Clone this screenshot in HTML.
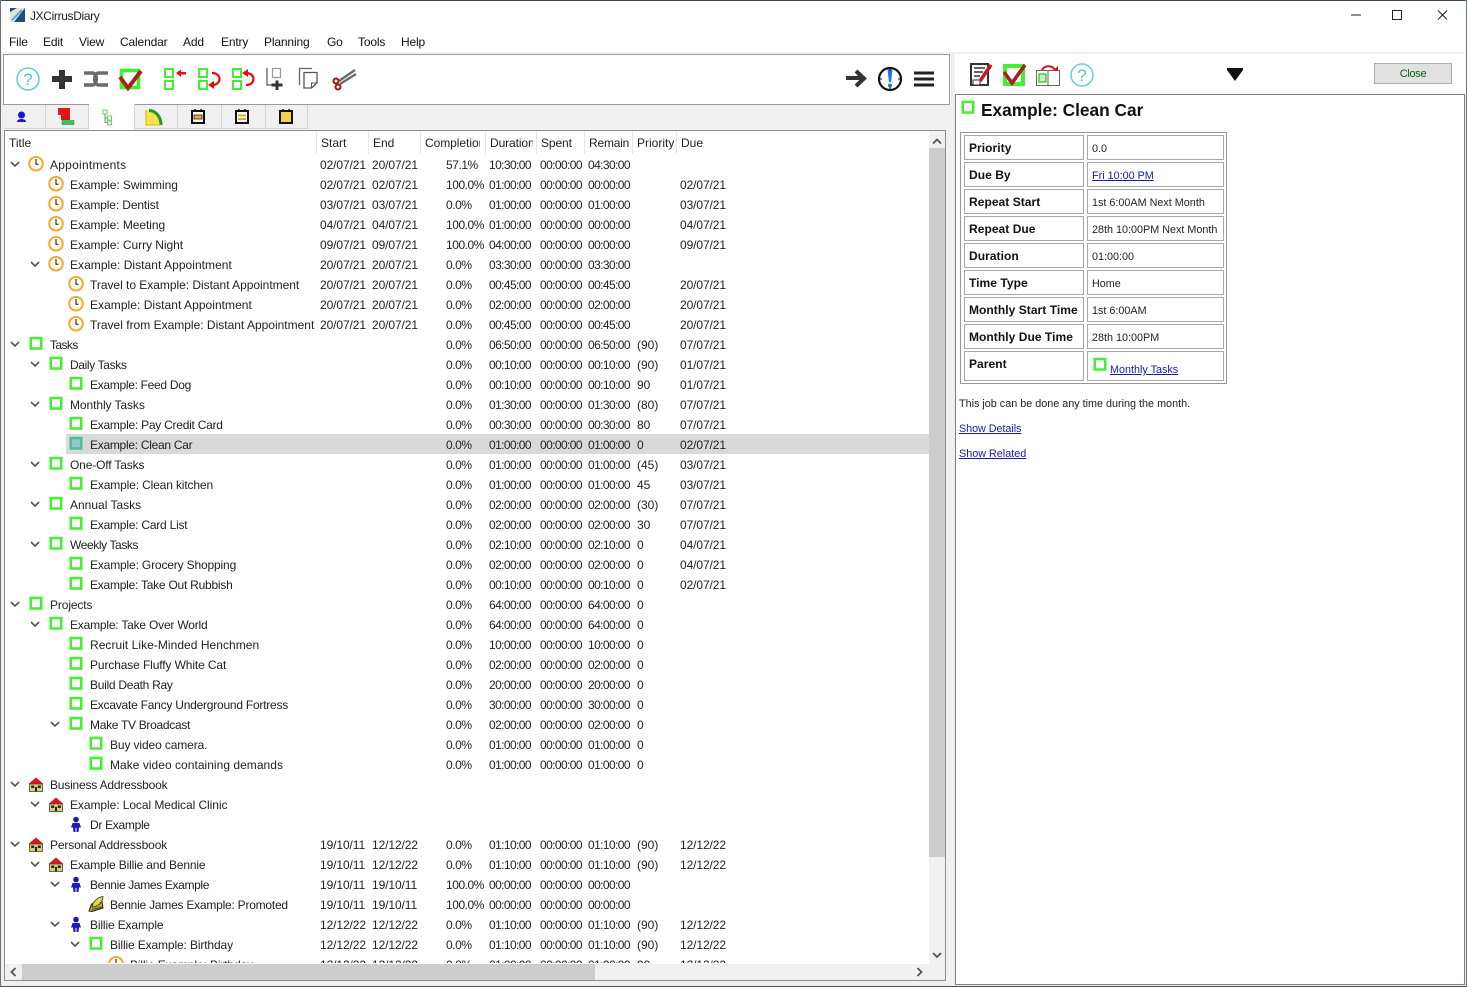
<!DOCTYPE html>
<html><head><meta charset="utf-8"><title>JXCirrusDiary</title>
<style>
html,body{margin:0;padding:0;width:1467px;height:987px;overflow:hidden;background:#f0f0f0}
body{position:relative;font-family:"Liberation Sans",sans-serif;font-size:12px;color:#222}
div,span,svg,a{position:absolute;white-space:nowrap}
.menu span{top:35px;font-size:12px;line-height:14px;color:#111;letter-spacing:-.15px}
.tab{top:105px;height:24px;background:#f0f0f0;border-right:1px solid #d4d4d4;border-bottom:1px solid #d4d4d4;box-sizing:border-box}
.h{top:136px;line-height:14px;color:#222}
.sep{top:132px;width:1px;height:22px;background:#e6e6e6}
#tree{left:5px;top:155px;width:924px;height:808px;overflow:hidden}
.r{left:-5px;width:930px;height:20px;line-height:20px}
.r span{top:0}
.s{left:320px;letter-spacing:-.1px}.e{left:372px;letter-spacing:-.1px}.c{left:446px;letter-spacing:-.45px}.d{left:489px;letter-spacing:-.6px}.p{left:540px;letter-spacing:-.6px}.m{left:588px;letter-spacing:-.6px}.o{left:637px}.u{left:680px;letter-spacing:-.1px}
.r svg{width:16px;height:16px;top:1px}
.r svg.k{width:10px;height:6px;top:6px}
.lbl,.val{background:#fff;border:1px solid #a8a8a8;box-sizing:border-box;height:25px}
.lbl{left:964px;width:120px;padding-left:4px;font-weight:bold;font-size:12px;color:#111;letter-spacing:.05px;line-height:24px}
.val{left:1087px;width:137px;padding-left:4px;color:#222;font-size:10.8px;line-height:26px}
a{color:#1a1aa6;text-decoration:underline}
</style></head><body>
<svg width="0" height="0" style="left:0;top:0"><defs>
<symbol id="clk" viewBox="0 0 16 16"><circle cx="8" cy="7.700" r="6.800" fill="#fffbe8" stroke="#f2a93b" stroke-width="2"/><path d="M8 3V8.300H10.500" fill="none" stroke="#333" stroke-width="1.200"/></symbol>
<symbol id="g" viewBox="0 0 16 16"><rect x="2.750" y="2" width="10.500" height="10.500" fill="#fff" stroke="#44ee33" stroke-width="2.500"/></symbol>
<symbol id="gs" viewBox="0 0 16 16"><rect x="2.750" y="2" width="10.500" height="10.500" fill="#9ac4cc" stroke="#4bc28c" stroke-width="2.500"/></symbol>
<symbol id="hs" viewBox="0 0 16 16"><path d="M.5 8L8 1.500L15.500 8Z" fill="#d8141c"/><rect x="1.500" y="8" width="13" height="7.500" fill="#d9cf6a" stroke="#444" stroke-width=".8"/><rect x="3.200" y="9.500" width="3" height="2.500" fill="#224"/><rect x="9.800" y="9.500" width="3" height="2.500" fill="#224"/><rect x="7" y="11" width="2" height="4.500" fill="#223"/></symbol>
<symbol id="pr" viewBox="0 0 16 16"><circle cx="8" cy="3.600" r="2.800" fill="#1a1ac0"/><path d="M4.500 7H11.500L13 11.500H11L10.500 16H8.500V12H7.500V16H5.500L5 11.500H3Z" fill="#1a1ac0"/></symbol>
<symbol id="bk" viewBox="0 0 16 16"><path d="M1 15L3.500 8L14 6L15 12L4 15.500Z" fill="#b5ad1e" stroke="#222" stroke-width="1"/><path d="M4 11C5 5 10 1 15 .5C15 6 10 11 4 11Z" fill="#dfd84a" stroke="#333" stroke-width=".8"/><path d="M4 13.500L14.500 11" stroke="#333" stroke-width=".8"/></symbol>
<symbol id="ch" viewBox="0 0 10 6"><path d="M1 1L5 5L9 1" fill="none" stroke="#555" stroke-width="1.600"/></symbol>
</defs></svg>

<!-- window chrome -->
<div style="left:0;top:0;width:1467px;height:52px;background:#fff"></div>
<div style="left:0;top:0;width:1467px;height:1px;background:#3c4a52"></div>
<div style="left:0;top:0;width:1px;height:987px;background:#6b7378"></div>
<div style="left:1466px;top:0;width:1px;height:987px;background:#6b7378"></div>
<div style="left:0;top:986px;width:1467px;height:1px;background:#4a5358"></div>
<svg style="left:10px;top:8px" width="15" height="14" viewBox="0 0 15 14"><rect width="15" height="14" fill="#1d4f80"/><path d="M0 14L0 4L7 0H15L4 14Z" fill="#dfe8d8"/><path d="M2 12L12 2" stroke="#6ba3cf" stroke-width="2"/></svg>
<span style="left:30px;top:9px;line-height:14px;color:#222;font-size:12px;letter-spacing:-.35px">JXCirrusDiary</span>
<div class="menu">
<span style="left:9px">File</span><span style="left:43px">Edit</span><span style="left:79px">View</span><span style="left:120px">Calendar</span><span style="left:183px">Add</span><span style="left:221px">Entry</span><span style="left:264px">Planning</span><span style="left:327px">Go</span><span style="left:358px">Tools</span><span style="left:401px">Help</span>
</div>
<svg style="left:1340px;top:5px" width="120" height="20" viewBox="0 0 120 20"><path d="M11 10H21" stroke="#222" stroke-width="1"/><rect x="52.500" y="5.500" width="9" height="9" fill="none" stroke="#222"/><path d="M98 5.500L107 14.500M107 5.500L98 14.500" stroke="#222"/></svg>

<!-- toolbar -->
<div style="left:3px;top:54px;width:947px;height:51px;background:#fff;border:1px solid #9a9a9a;box-sizing:border-box"></div>
<div style="left:955px;top:54px;width:511px;height:41px;background:#fff"></div>
<svg style="left:0;top:54px" width="370" height="50" viewBox="0 54 370 50">
<circle cx="28" cy="79" r="11" fill="#fff" stroke="#62d0d8" stroke-width="1.600"/>
<text x="28" y="85" font-family="Liberation Sans" font-size="17" fill="#4fc4d0" text-anchor="middle">?</text>
<path d="M59 70H65V76H72V82H65V89H59V82H52V76H59Z" fill="#333"/>
<path d="M84 73H92C98 73 98 85 92 85H84M108 73H99C93 73 93 85 99 85H108" fill="none" stroke="#6a6a6a" stroke-width="3.400"/>
<rect x="121.500" y="70.500" width="17" height="17" fill="#fff" stroke="#44ee33" stroke-width="3.600"/>
<path d="M120 77L128 88L141 71" fill="none" stroke="#a8201f" stroke-width="4"/>
<g fill="#fff" stroke="#44ee33" stroke-width="2"><rect x="165" y="69" width="8" height="8"/><rect x="165" y="81" width="8" height="8"/><rect x="199" y="69" width="8" height="8"/><rect x="199" y="81" width="8" height="8"/><rect x="233" y="69" width="8" height="8"/><rect x="233" y="81" width="8" height="8"/></g>
<path d="M176 73L181 69.500V72H186V74.500H181V77Z" fill="#e01010"/>
<path d="M212 73C222 73 222 85 212 85" fill="none" stroke="#e01010" stroke-width="2.200"/><path d="M214 81V89L208 85Z" fill="#e01010"/>
<path d="M246 85C256 85 256 73 246 73" fill="none" stroke="#e01010" stroke-width="2.200"/><path d="M248 69V77L242 73Z" fill="#e01010"/>
<rect x="272.500" y="68.500" width="8" height="9" fill="#fff" stroke="#999" stroke-width="1.200"/><path d="M267 68V85H272" fill="none" stroke="#555" stroke-width="1.200"/>
<path d="M275.500 80.500H278.500V83.500H282.500V86.500H278.500V90H275.500V86.500H271.500V83.500H275.500Z" fill="#333"/>
<path d="M299.500 85V68.500H312" fill="none" stroke="#666" stroke-width="1.300"/>
<path d="M304 72.500H317V83L311.500 88H304Z" fill="#fff" stroke="#555" stroke-width="1.300"/><path d="M311.500 88V83H317" fill="none" stroke="#555"/>
<path d="M339 81L355 70M340 84L356 74" stroke="#6a6a6a" stroke-width="2.400"/><circle cx="336" cy="81" r="2.500" fill="#fff" stroke="#a01818" stroke-width="2"/><circle cx="338" cy="87" r="2.500" fill="#fff" stroke="#a01818" stroke-width="2"/>
</svg>
<svg style="left:840px;top:60px" width="100" height="36" viewBox="840 60 100 36">
<path d="M846 78H862M856 71L864 78.500L856 86" fill="none" stroke="#333" stroke-width="4"/>
<circle cx="890" cy="79" r="11" fill="#fff" stroke="#111" stroke-width="2.200"/><path d="M887.500 69.500H892.500L891 82H889Z" fill="#1878e0"/><circle cx="890" cy="85.500" r="2" fill="#1878e0"/>
<path d="M890 69V71M890 87V89M880 79H882M898 79H900" stroke="#111" stroke-width="1"/>
<path d="M914 73H934M914 79H934M914 85H934" stroke="#222" stroke-width="3"/>
</svg>

<!-- detail toolbar -->
<svg style="left:960px;top:56px" width="290" height="36" viewBox="960 56 290 36">
<path d="M971 64H988V85H971Z" fill="#fff" stroke="#333" stroke-width="2"/><path d="M974 68H985M974 72H983M974 76H980" stroke="#333" stroke-width="1.600"/><path d="M973 80H980V85H973Z" fill="#fff" stroke="#333"/><path d="M980 81L991 65" stroke="#c41a20" stroke-width="3.600"/>
<rect x="1005" y="66" width="18" height="18" fill="#fff" stroke="#44ee33" stroke-width="4"/><path d="M1004 72L1012 83L1025 65" fill="none" stroke="#a8201f" stroke-width="3.600"/>
<rect x="1036.500" y="70.500" width="23" height="15" fill="#fff" stroke="#666"/><path d="M1048 70V85" stroke="#666"/><rect x="1039" y="74" width="7" height="8" fill="#cfe8c6" stroke="#44cc33" stroke-width="1.400"/>
<path d="M1042 70C1045 65 1052 65 1055 70" fill="none" stroke="#d8141c" stroke-width="2"/><path d="M1053 71H1058V66Z" fill="#d8141c"/>
<circle cx="1082" cy="75" r="11" fill="#fff" stroke="#62d0d8" stroke-width="1.500"/>
<text x="1082" y="81" font-family="Liberation Sans" font-size="17" fill="#4fc4d0" text-anchor="middle">?</text>
<path d="M1227 70H1243L1235 81Z" fill="#111"/><path d="M1227 69H1243" stroke="#111" stroke-width="2"/>
</svg>
<div style="left:1374px;top:63px;width:78px;height:21px;background:#e1e1e1;border:1px solid #adadad;box-sizing:border-box;text-align:center;line-height:20px;font-size:11px;color:#0f5c1c;letter-spacing:-.3px">Close</div>

<!-- tabs -->
<div class="tab" style="left:4px;width:42px"></div><div class="tab" style="left:46px;width:43px"></div>
<div class="tab" style="left:89px;width:46px;background:#fff;height:26px;top:104px;border-bottom:0"></div>
<div class="tab" style="left:135px;width:43px"></div><div class="tab" style="left:178px;width:44px"></div><div class="tab" style="left:222px;width:44px"></div><div class="tab" style="left:266px;width:42px"></div>
<svg style="left:0;top:104px" width="310" height="26" viewBox="0 104 310 26">
<circle cx="21.500" cy="115" r="3.500" fill="#1414d8"/><path d="M17 122C17 118 26 118 26 122Z" fill="#1414d8"/>
<rect x="58" y="108" width="12" height="7" fill="#e01818"/><rect x="61" y="115" width="9" height="5" fill="#d01818"/><rect x="62" y="120.500" width="12" height="4" fill="#33cc44" stroke="#185" stroke-width=".5"/>
<g fill="#fff" stroke="#6ed66e" stroke-width="1.100"><rect x="103" y="110" width="4" height="4"/><rect x="107.500" y="116" width="4" height="4"/><rect x="107.500" y="121" width="4" height="4"/></g><path d="M105 114V122.500H107M105 118H107" fill="none" stroke="#555" stroke-width=".7"/>
<path d="M146 125V110H151C158 110 162 117 162 125Z" fill="#fde24a"/><path d="M149 110.500C156 110.500 161 117 161 125" fill="none" stroke="#1c9a2c" stroke-width="3"/><path d="M146 110V125H161" fill="none" stroke="#d8b020" stroke-width="1"/>
<g stroke="#111" stroke-width="2" fill="#fff"><rect x="192" y="111" width="12" height="12"/><rect x="236" y="111" width="12" height="12"/><rect x="280" y="111" width="12" height="12" fill="#f6d04d"/></g>
<path d="M195 109V112M201 109V112M239 109V112M245 109V112M283 109V112M289 109V112" stroke="#111" stroke-width="1.500"/>
<rect x="194" y="115" width="8" height="4" fill="#e0b530" stroke="#222" stroke-width=".8"/>
<rect x="238" y="114.500" width="8" height="2" fill="#d8ad20"/><rect x="238" y="118" width="8" height="2" fill="#d8ad20"/>
</svg>

<!-- tree -->
<div style="left:4px;top:130px;width:942px;height:851px;background:#fff;border:1px solid #8c8c8c;box-sizing:border-box"></div>
<span class="h" style="left:9px">Title</span><span class="h" style="left:321px">Start</span><span class="h" style="left:373px">End</span><span class="h" style="left:425px;width:55px;overflow:hidden;letter-spacing:-.05px">Completion</span><span class="h" style="left:490px;width:43px;overflow:hidden;letter-spacing:-.1px">Duration</span><span class="h" style="left:541px;letter-spacing:-.1px">Spent</span><span class="h" style="left:589px;letter-spacing:-.2px">Remain</span><span class="h" style="left:637px;width:37px;overflow:hidden">Priority</span><span class="h" style="left:681px">Due</span>
<i class="sep" style="position:absolute;left:316px"></i><i class="sep" style="position:absolute;left:368px"></i><i class="sep" style="position:absolute;left:420px"></i><i class="sep" style="position:absolute;left:485px"></i><i class="sep" style="position:absolute;left:536px"></i><i class="sep" style="position:absolute;left:584px"></i><i class="sep" style="position:absolute;left:632px"></i><i class="sep" style="position:absolute;left:676px"></i>

<div id="tree">
<div class="r" style="top:0"><svg class="k" style="left:10px"><use href="#ch"/></svg><svg style="left:28px"><use href="#clk"/></svg><span style="left:50px;letter-spacing:.25px">Appointments</span><span class="s">02/07/21</span><span class="e">20/07/21</span><span class="c">57.1%</span><span class="d">10:30:00</span><span class="p">00:00:00</span><span class="m">04:30:00</span></div>
<div class="r" style="top:20px"><svg style="left:48px"><use href="#clk"/></svg><span style="left:70px;letter-spacing:-.05px">Example: Swimming</span><span class="s">02/07/21</span><span class="e">02/07/21</span><span class="c">100.0%</span><span class="d">01:00:00</span><span class="p">00:00:00</span><span class="m">00:00:00</span><span class="u">02/07/21</span></div>
<div class="r" style="top:40px"><svg style="left:48px"><use href="#clk"/></svg><span style="left:70px;letter-spacing:-.12px">Example: Dentist</span><span class="s">03/07/21</span><span class="e">03/07/21</span><span class="c">0.0%</span><span class="d">01:00:00</span><span class="p">00:00:00</span><span class="m">01:00:00</span><span class="u">03/07/21</span></div>
<div class="r" style="top:60px"><svg style="left:48px"><use href="#clk"/></svg><span style="left:70px;letter-spacing:-.06px">Example: Meeting</span><span class="s">04/07/21</span><span class="e">04/07/21</span><span class="c">100.0%</span><span class="d">01:00:00</span><span class="p">00:00:00</span><span class="m">00:00:00</span><span class="u">04/07/21</span></div>
<div class="r" style="top:80px"><svg style="left:48px"><use href="#clk"/></svg><span style="left:70px;letter-spacing:-.05px">Example: Curry Night</span><span class="s">09/07/21</span><span class="e">09/07/21</span><span class="c">100.0%</span><span class="d">04:00:00</span><span class="p">00:00:00</span><span class="m">00:00:00</span><span class="u">09/07/21</span></div>
<div class="r" style="top:100px"><svg class="k" style="left:30px"><use href="#ch"/></svg><svg style="left:48px"><use href="#clk"/></svg><span style="left:70px;letter-spacing:.04px">Example: Distant Appointment</span><span class="s">20/07/21</span><span class="e">20/07/21</span><span class="c">0.0%</span><span class="d">03:30:00</span><span class="p">00:00:00</span><span class="m">03:30:00</span></div>
<div class="r" style="top:120px"><svg style="left:68px"><use href="#clk"/></svg><span style="left:90px;letter-spacing:-.03px">Travel to Example: Distant Appointment</span><span class="s">20/07/21</span><span class="e">20/07/21</span><span class="c">0.0%</span><span class="d">00:45:00</span><span class="p">00:00:00</span><span class="m">00:45:00</span><span class="u">20/07/21</span></div>
<div class="r" style="top:140px"><svg style="left:68px"><use href="#clk"/></svg><span style="left:90px;letter-spacing:.04px">Example: Distant Appointment</span><span class="s">20/07/21</span><span class="e">20/07/21</span><span class="c">0.0%</span><span class="d">02:00:00</span><span class="p">00:00:00</span><span class="m">02:00:00</span><span class="u">20/07/21</span></div>
<div class="r" style="top:160px"><svg style="left:68px"><use href="#clk"/></svg><span style="left:90px">Travel from Example: Distant Appointment</span><span class="s">20/07/21</span><span class="e">20/07/21</span><span class="c">0.0%</span><span class="d">00:45:00</span><span class="p">00:00:00</span><span class="m">00:45:00</span><span class="u">20/07/21</span></div>
<div class="r" style="top:180px"><svg class="k" style="left:10px"><use href="#ch"/></svg><svg style="left:28px"><use href="#g"/></svg><span style="left:50px;letter-spacing:-.6px">Tasks</span><span class="c">0.0%</span><span class="d">06:50:00</span><span class="p">00:00:00</span><span class="m">06:50:00</span><span class="o">(90)</span><span class="u">07/07/21</span></div>
<div class="r" style="top:200px"><svg class="k" style="left:30px"><use href="#ch"/></svg><svg style="left:48px"><use href="#g"/></svg><span style="left:70px;letter-spacing:-.36px">Daily Tasks</span><span class="c">0.0%</span><span class="d">00:10:00</span><span class="p">00:00:00</span><span class="m">00:10:00</span><span class="o">(90)</span><span class="u">01/07/21</span></div>
<div class="r" style="top:220px"><svg style="left:68px"><use href="#g"/></svg><span style="left:90px;letter-spacing:-.3px">Example: Feed Dog</span><span class="c">0.0%</span><span class="d">00:10:00</span><span class="p">00:00:00</span><span class="m">00:10:00</span><span class="o">90</span><span class="u">01/07/21</span></div>
<div class="r" style="top:240px"><svg class="k" style="left:30px"><use href="#ch"/></svg><svg style="left:48px"><use href="#g"/></svg><span style="left:70px;letter-spacing:-.08px">Monthly Tasks</span><span class="c">0.0%</span><span class="d">01:30:00</span><span class="p">00:00:00</span><span class="m">01:30:00</span><span class="o">(80)</span><span class="u">07/07/21</span></div>
<div class="r" style="top:260px"><svg style="left:68px"><use href="#g"/></svg><span style="left:90px;letter-spacing:-.25px">Example: Pay Credit Card</span><span class="c">0.0%</span><span class="d">00:30:00</span><span class="p">00:00:00</span><span class="m">00:30:00</span><span class="o">80</span><span class="u">07/07/21</span></div>
<div class="r" style="top:280px"><div style="left:66px;top:-1px;width:863px;height:20px;background:#d9d9d9"></div><svg style="left:68px"><use href="#gs"/></svg><span style="left:90px;letter-spacing:-.28px">Example: Clean Car</span><span class="c">0.0%</span><span class="d">01:00:00</span><span class="p">00:00:00</span><span class="m">01:00:00</span><span class="o">0</span><span class="u">02/07/21</span></div>
<div class="r" style="top:300px"><svg class="k" style="left:30px"><use href="#ch"/></svg><svg style="left:48px"><use href="#g"/></svg><span style="left:70px;letter-spacing:-.15px">One-Off Tasks</span><span class="c">0.0%</span><span class="d">01:00:00</span><span class="p">00:00:00</span><span class="m">01:00:00</span><span class="o">(45)</span><span class="u">03/07/21</span></div>
<div class="r" style="top:320px"><svg style="left:68px"><use href="#g"/></svg><span style="left:90px;letter-spacing:-.14px">Example: Clean kitchen</span><span class="c">0.0%</span><span class="d">01:00:00</span><span class="p">00:00:00</span><span class="m">01:00:00</span><span class="o">45</span><span class="u">03/07/21</span></div>
<div class="r" style="top:340px"><svg class="k" style="left:30px"><use href="#ch"/></svg><svg style="left:48px"><use href="#g"/></svg><span style="left:70px">Annual Tasks</span><span class="c">0.0%</span><span class="d">02:00:00</span><span class="p">00:00:00</span><span class="m">02:00:00</span><span class="o">(30)</span><span class="u">07/07/21</span></div>
<div class="r" style="top:360px"><svg style="left:68px"><use href="#g"/></svg><span style="left:90px;letter-spacing:-.22px">Example: Card List</span><span class="c">0.0%</span><span class="d">02:00:00</span><span class="p">00:00:00</span><span class="m">02:00:00</span><span class="o">30</span><span class="u">07/07/21</span></div>
<div class="r" style="top:380px"><svg class="k" style="left:30px"><use href="#ch"/></svg><svg style="left:48px"><use href="#g"/></svg><span style="left:70px;letter-spacing:-.4px">Weekly Tasks</span><span class="c">0.0%</span><span class="d">02:10:00</span><span class="p">00:00:00</span><span class="m">02:10:00</span><span class="o">0</span><span class="u">04/07/21</span></div>
<div class="r" style="top:400px"><svg style="left:68px"><use href="#g"/></svg><span style="left:90px;letter-spacing:-.16px">Example: Grocery Shopping</span><span class="c">0.0%</span><span class="d">02:00:00</span><span class="p">00:00:00</span><span class="m">02:00:00</span><span class="o">0</span><span class="u">04/07/21</span></div>
<div class="r" style="top:420px"><svg style="left:68px"><use href="#g"/></svg><span style="left:90px;letter-spacing:-.24px">Example: Take Out Rubbish</span><span class="c">0.0%</span><span class="d">00:10:00</span><span class="p">00:00:00</span><span class="m">00:10:00</span><span class="o">0</span><span class="u">02/07/21</span></div>
<div class="r" style="top:440px"><svg class="k" style="left:10px"><use href="#ch"/></svg><svg style="left:28px"><use href="#g"/></svg><span style="left:50px;letter-spacing:-.12px">Projects</span><span class="c">0.0%</span><span class="d">64:00:00</span><span class="p">00:00:00</span><span class="m">64:00:00</span><span class="o">0</span></div>
<div class="r" style="top:460px"><svg class="k" style="left:30px"><use href="#ch"/></svg><svg style="left:48px"><use href="#g"/></svg><span style="left:70px;letter-spacing:-.2px">Example: Take Over World</span><span class="c">0.0%</span><span class="d">64:00:00</span><span class="p">00:00:00</span><span class="m">64:00:00</span><span class="o">0</span></div>
<div class="r" style="top:480px"><svg style="left:68px"><use href="#g"/></svg><span style="left:90px;letter-spacing:.04px">Recruit Like-Minded Henchmen</span><span class="c">0.0%</span><span class="d">10:00:00</span><span class="p">00:00:00</span><span class="m">10:00:00</span><span class="o">0</span></div>
<div class="r" style="top:500px"><svg style="left:68px"><use href="#g"/></svg><span style="left:90px;letter-spacing:-.12px">Purchase Fluffy White Cat</span><span class="c">0.0%</span><span class="d">02:00:00</span><span class="p">00:00:00</span><span class="m">02:00:00</span><span class="o">0</span></div>
<div class="r" style="top:520px"><svg style="left:68px"><use href="#g"/></svg><span style="left:90px;letter-spacing:-.27px">Build Death Ray</span><span class="c">0.0%</span><span class="d">20:00:00</span><span class="p">00:00:00</span><span class="m">20:00:00</span><span class="o">0</span></div>
<div class="r" style="top:540px"><svg style="left:68px"><use href="#g"/></svg><span style="left:90px;letter-spacing:-.23px">Excavate Fancy Underground Fortress</span><span class="c">0.0%</span><span class="d">30:00:00</span><span class="p">00:00:00</span><span class="m">30:00:00</span><span class="o">0</span></div>
<div class="r" style="top:560px"><svg class="k" style="left:50px"><use href="#ch"/></svg><svg style="left:68px"><use href="#g"/></svg><span style="left:90px;letter-spacing:-.3px">Make TV Broadcast</span><span class="c">0.0%</span><span class="d">02:00:00</span><span class="p">00:00:00</span><span class="m">02:00:00</span><span class="o">0</span></div>
<div class="r" style="top:580px"><svg style="left:88px"><use href="#g"/></svg><span style="left:110px;letter-spacing:-.12px">Buy video camera.</span><span class="c">0.0%</span><span class="d">01:00:00</span><span class="p">00:00:00</span><span class="m">01:00:00</span><span class="o">0</span></div>
<div class="r" style="top:600px"><svg style="left:88px"><use href="#g"/></svg><span style="left:110px;letter-spacing:.03px">Make video containing demands</span><span class="c">0.0%</span><span class="d">01:00:00</span><span class="p">00:00:00</span><span class="m">01:00:00</span><span class="o">0</span></div>
<div class="r" style="top:620px"><svg class="k" style="left:10px"><use href="#ch"/></svg><svg style="left:28px"><use href="#hs"/></svg><span style="left:50px;letter-spacing:-.2px">Business Addressbook</span></div>
<div class="r" style="top:640px"><svg class="k" style="left:30px"><use href="#ch"/></svg><svg style="left:48px"><use href="#hs"/></svg><span style="left:70px;letter-spacing:-.07px">Example: Local Medical Clinic</span></div>
<div class="r" style="top:660px"><svg style="left:68px"><use href="#pr"/></svg><span style="left:90px;letter-spacing:-.3px">Dr Example</span></div>
<div class="r" style="top:680px"><svg class="k" style="left:10px"><use href="#ch"/></svg><svg style="left:28px"><use href="#hs"/></svg><span style="left:50px;letter-spacing:-.15px">Personal Addressbook</span><span class="s">19/10/11</span><span class="e">12/12/22</span><span class="c">0.0%</span><span class="d">01:10:00</span><span class="p">00:00:00</span><span class="m">01:10:00</span><span class="o">(90)</span><span class="u">12/12/22</span></div>
<div class="r" style="top:700px"><svg class="k" style="left:30px"><use href="#ch"/></svg><svg style="left:48px"><use href="#hs"/></svg><span style="left:70px;letter-spacing:-.16px">Example Billie and Bennie</span><span class="s">19/10/11</span><span class="e">12/12/22</span><span class="c">0.0%</span><span class="d">01:10:00</span><span class="p">00:00:00</span><span class="m">01:10:00</span><span class="o">(90)</span><span class="u">12/12/22</span></div>
<div class="r" style="top:720px"><svg class="k" style="left:50px"><use href="#ch"/></svg><svg style="left:68px"><use href="#pr"/></svg><span style="left:90px;letter-spacing:-.35px">Bennie James Example</span><span class="s">19/10/11</span><span class="e">19/10/11</span><span class="c">100.0%</span><span class="d">00:00:00</span><span class="p">00:00:00</span><span class="m">00:00:00</span></div>
<div class="r" style="top:740px"><svg style="left:88px"><use href="#bk"/></svg><span style="left:110px;letter-spacing:-.23px">Bennie James Example: Promoted</span><span class="s">19/10/11</span><span class="e">19/10/11</span><span class="c">100.0%</span><span class="d">00:00:00</span><span class="p">00:00:00</span><span class="m">00:00:00</span></div>
<div class="r" style="top:760px"><svg class="k" style="left:50px"><use href="#ch"/></svg><svg style="left:68px"><use href="#pr"/></svg><span style="left:90px;letter-spacing:-.14px">Billie Example</span><span class="s">12/12/22</span><span class="e">12/12/22</span><span class="c">0.0%</span><span class="d">01:10:00</span><span class="p">00:00:00</span><span class="m">01:10:00</span><span class="o">(90)</span><span class="u">12/12/22</span></div>
<div class="r" style="top:780px"><svg class="k" style="left:70px"><use href="#ch"/></svg><svg style="left:88px"><use href="#g"/></svg><span style="left:110px;letter-spacing:-.13px">Billie Example: Birthday</span><span class="s">12/12/22</span><span class="e">12/12/22</span><span class="c">0.0%</span><span class="d">01:10:00</span><span class="p">00:00:00</span><span class="m">01:10:00</span><span class="o">(90)</span><span class="u">12/12/22</span></div>
<div class="r" style="top:800px"><svg style="left:108px"><use href="#clk"/></svg><span style="left:130px;letter-spacing:-.13px">Billie Example: Birthday</span><span class="s">12/12/22</span><span class="e">12/12/22</span><span class="c">0.0%</span><span class="d">01:00:00</span><span class="p">00:00:00</span><span class="m">01:00:00</span><span class="o">90</span><span class="u">12/12/22</span></div>
</div>

<!-- scrollbars -->
<div style="left:929px;top:131px;width:16px;height:849px;background:#f0f0f0"></div>
<div style="left:929px;top:148px;width:16px;height:709px;background:#cdcdcd"></div>
<div style="left:5px;top:964px;width:940px;height:16px;background:#f0f0f0"></div>
<div style="left:22px;top:964px;width:573px;height:16px;background:#cdcdcd"></div>
<svg style="left:5px;top:131px" width="940" height="849" viewBox="5 131 940 849">
<g fill="none" stroke="#555" stroke-width="1.800"><path d="M933 143.500L937 139.500L941 143.500"/><path d="M933 953L937 957L941 953"/><path d="M15.500 968L11.500 972L15.500 976"/><path d="M917.500 968L921.500 972L917.500 976"/></g>
</svg>

<!-- detail pane -->
<div style="left:955px;top:94px;width:510px;height:891px;background:#fff;border:1px solid #808080;box-sizing:border-box"></div>
<svg style="left:960px;top:100px;width:16px;height:16px"><use href="#g"/></svg>
<span style="left:981px;top:100px;line-height:20px;font-weight:bold;font-size:17.300px;color:#111">Example: Clean Car</span>
<div style="left:960px;top:132px;width:267px;height:252px;background:#fff;border:1px solid #999;box-sizing:border-box"></div>
<div class="lbl" style="top:135px">Priority</div><div class="val" style="top:135px">0.0</div>
<div class="lbl" style="top:162px">Due By</div><div class="val" style="top:162px"><a style="position:static">Fri 10:00 PM</a></div>
<div class="lbl" style="top:189px">Repeat Start</div><div class="val" style="top:189px">1st 6:00AM Next Month</div>
<div class="lbl" style="top:216px">Repeat Due</div><div class="val" style="top:216px">28th 10:00PM Next Month</div>
<div class="lbl" style="top:243px">Duration</div><div class="val" style="top:243px">01:00:00</div>
<div class="lbl" style="top:270px">Time Type</div><div class="val" style="top:270px">Home</div>
<div class="lbl" style="top:297px">Monthly Start Time</div><div class="val" style="top:297px">1st 6:00AM</div>
<div class="lbl" style="top:324px">Monthly Due Time</div><div class="val" style="top:324px">28th 10:00PM</div>
<div class="lbl" style="top:351px;height:30px">Parent</div><div class="val" style="top:351px;height:30px"></div>
<svg style="left:1092px;top:357px;width:16px;height:16px"><use href="#g"/></svg>
<a style="left:1110px;top:364px;font-size:10.800px;line-height:13px">Monthly Tasks</a>
<span style="left:959px;top:398px;font-size:10.800px;line-height:13px;color:#222">This job can be done any time during the month.</span>
<a style="left:959px;top:423px;font-size:10.800px;line-height:13px;letter-spacing:-.05px">Show Details</a>
<a style="left:959px;top:448px;font-size:10.800px;line-height:13px">Show Related</a>
</body></html>
